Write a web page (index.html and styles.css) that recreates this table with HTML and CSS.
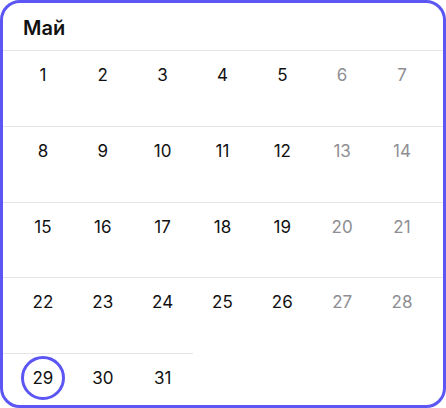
FILE: index.html
```html
<!DOCTYPE html>
<html lang="ru">
<head>
<meta charset="utf-8">
<link rel="stylesheet" href="styles.css">
</head>
<body>
<div class="calendar">
  <div class="header">Май</div>
  <div class="week">
    <div class="day"><span class="num">1</span></div>
    <div class="day"><span class="num">2</span></div>
    <div class="day"><span class="num">3</span></div>
    <div class="day"><span class="num">4</span></div>
    <div class="day"><span class="num">5</span></div>
    <div class="day weekend"><span class="num">6</span></div>
    <div class="day weekend"><span class="num">7</span></div>
  </div>
  <div class="week">
    <div class="day"><span class="num">8</span></div>
    <div class="day"><span class="num">9</span></div>
    <div class="day"><span class="num">10</span></div>
    <div class="day"><span class="num">11</span></div>
    <div class="day"><span class="num">12</span></div>
    <div class="day weekend"><span class="num">13</span></div>
    <div class="day weekend"><span class="num">14</span></div>
  </div>
  <div class="week">
    <div class="day"><span class="num">15</span></div>
    <div class="day"><span class="num">16</span></div>
    <div class="day"><span class="num">17</span></div>
    <div class="day"><span class="num">18</span></div>
    <div class="day"><span class="num">19</span></div>
    <div class="day weekend"><span class="num">20</span></div>
    <div class="day weekend"><span class="num">21</span></div>
  </div>
  <div class="week">
    <div class="day"><span class="num">22</span></div>
    <div class="day"><span class="num">23</span></div>
    <div class="day"><span class="num">24</span></div>
    <div class="day"><span class="num">25</span></div>
    <div class="day"><span class="num">26</span></div>
    <div class="day weekend"><span class="num">27</span></div>
    <div class="day weekend"><span class="num">28</span></div>
  </div>
  <div class="week partial">
    <div class="day"><span class="num today">29</span></div>
    <div class="day"><span class="num">30</span></div>
    <div class="day"><span class="num">31</span></div>
  </div>
</div>
</body>
</html>
```
FILE: styles.css
```css
html, body {
  margin: 0;
  padding: 0;
  background: #ffffff;
}
body {
  font-family: Inter, "Noto Sans", sans-serif;
}
.calendar {
  box-sizing: border-box;
  width: 446px;
  height: 408px;
  border: 3px solid #5b56f4;
  border-radius: 20px;
  overflow: hidden;
  display: flex;
  flex-direction: column;
  background: #ffffff;
}
.header {
  box-sizing: border-box;
  height: 47px;
  padding-left: 20px;
  display: flex;
  align-items: center;
  font-size: 20px;
  font-weight: 600;
  color: #111111;
  padding-top: 2px;
  flex-shrink: 0;
}
.week {
  box-sizing: border-box;
  display: flex;
  flex-shrink: 0;
  height: 75.75px;
  border-top: 1px solid #e4e4e6;
  padding-left: 10px;
}
.week.partial {
  align-self: flex-start;
}
.day {
  width: 59.85px;
  display: flex;
  justify-content: center;
  padding-top: 2px;
  align-items: flex-start;
}
.num {
  box-sizing: border-box;
  width: 44px;
  height: 44px;
  border-radius: 50%;
  display: flex;
  align-items: center;
  justify-content: center;
  font-size: 17px;
  color: #111111;
}
.weekend .num {
  color: #8e8e93;
}
.num.today {
  border: 3px solid #5b56f4;
}
```
